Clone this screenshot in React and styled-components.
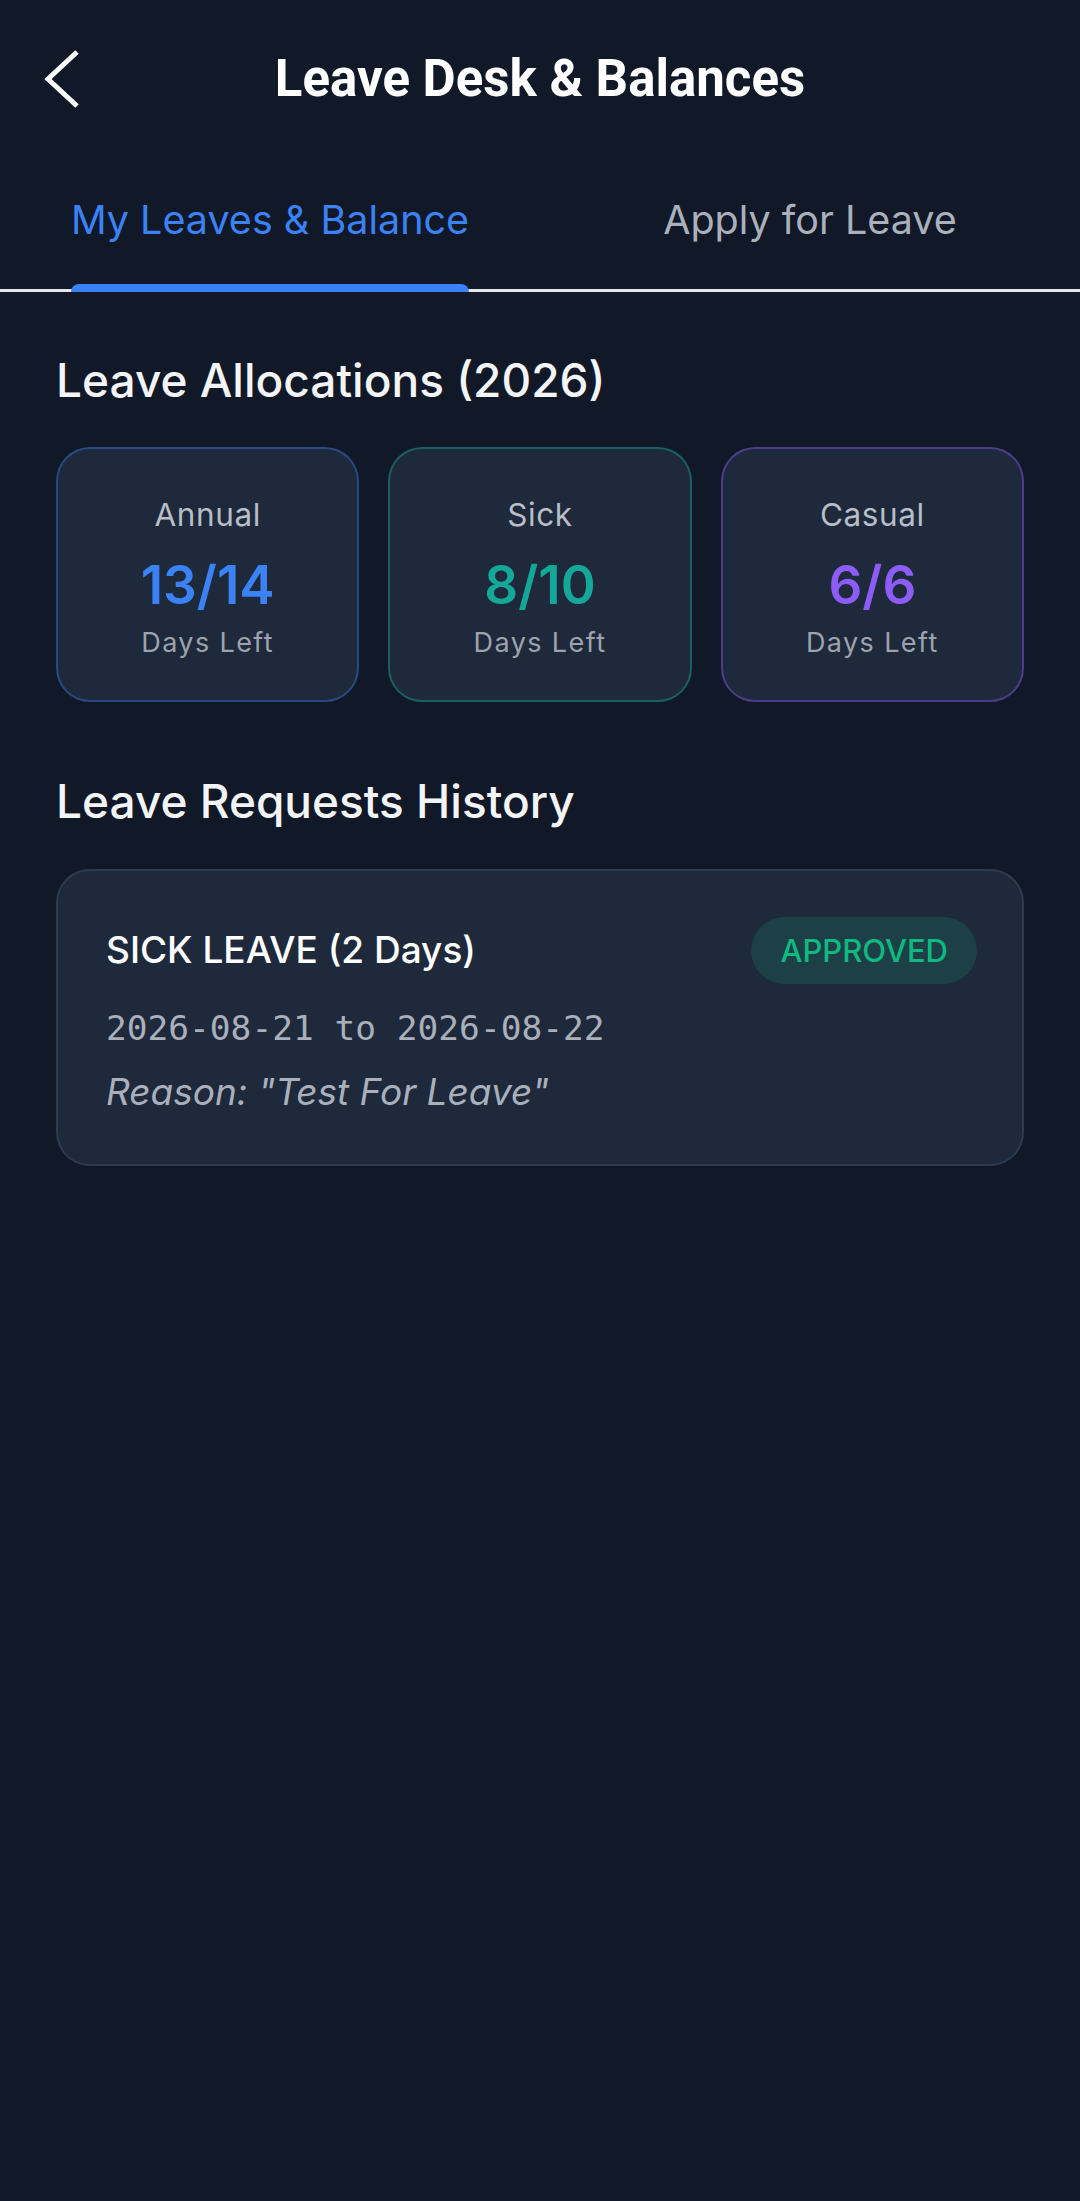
import React, { useState } from 'react'
import styled, { createGlobalStyle } from 'styled-components'

const COLORS = {
  BG: '#111827',
  CARD: '#1e293b',
  BLUE: '#3b82f6',
  TEAL: '#14a899',
  PURPLE: '#8b5cf6',
  GREEN: '#10b981',
}

const GlobalStyle = createGlobalStyle`
  html, body {
    margin: 0;
    padding: 0;
    background: ${COLORS.BG};
    min-height: 100%;
  }
  body {
    font-family: Inter, "Noto Sans", sans-serif;
    color: #f3f4f6;
  }
  * { box-sizing: border-box; }
`

const Page = styled.div`
  min-height: 2201px;
  background: ${COLORS.BG};
`

const Header = styled.header`
  display: grid;
  grid-template-columns: 1fr auto 1fr;
  align-items: center;
  height: 158px;
  padding: 0 40px;
`

const BackButton = styled.button`
  justify-self: start;
  display: flex;
  padding: 0;
  border: none;
  background: none;
  cursor: pointer;
`

const Title = styled.h1`
  margin: 0;
  font-family: Roboto, "Liberation Sans", sans-serif;
  font-weight: 700;
  font-size: 51px;
  line-height: 1.17;
  color: #ffffff;
`

const TabBar = styled.nav`
  display: grid;
  grid-template-columns: 1fr 1fr;
  box-shadow: inset 0 -3px 0 #e5e7eb;
`

const Tab = styled.button`
  display: flex;
  justify-content: center;
  padding: 39px 0 0;
  border: none;
  background: none;
  cursor: pointer;
`

const TabInner = styled.span`
  display: inline-flex;
  flex-direction: column;
  align-items: stretch;
`

const TabLabel = styled.span`
  font-family: Inter, sans-serif;
  font-size: 39.5px;
  line-height: 1.21;
  font-weight: 400;
  color: ${p => (p.$active ? COLORS.BLUE : '#aab1bc')};
`

const TabIndicator = styled.span`
  display: block;
  height: 8px;
  margin-top: 39px;
  border-radius: 8px 8px 0 0;
  background: ${p => (p.$active ? COLORS.BLUE : 'transparent')};
`

const Content = styled.main`
  padding: 61px 56px 0;
`

const SectionTitle = styled.h2`
  margin: ${p => p.$top || 0}px 0 0;
  font-family: Inter, sans-serif;
  font-size: 46px;
  line-height: 1.21;
  font-weight: 500;
  color: #f3f4f6;
`

const Allocations = styled.div`
  display: grid;
  grid-template-columns: repeat(3, 1fr);
  gap: 29px;
  margin-top: 39px;
`

const AllocCard = styled.div`
  height: 255px;
  padding-top: 47px;
  display: flex;
  flex-direction: column;
  align-items: center;
  background: ${COLORS.CARD};
  border: 2px solid ${p => p.$border};
  border-radius: 34px;
`

const AllocLabel = styled.div`
  font-size: 31.5px;
  line-height: 1.21;
  color: #b8bec8;
  letter-spacing: 0.6px;
`

const AllocValue = styled.div`
  margin-top: 18px;
  font-size: 53px;
  line-height: 1.21;
  font-weight: 600;
  color: ${p => p.$color};
`

const AllocNote = styled.div`
  margin-top: 10.5px;
  font-size: 27px;
  line-height: 1.21;
  letter-spacing: 1.4px;
  color: #9ca3af;
`

const HistoryList = styled.div`
  display: flex;
  flex-direction: column;
  gap: 28px;
  margin-top: 39px;
`

const RequestCard = styled.div`
  padding: 46px 45px 49px 48px;
  background: ${COLORS.CARD};
  border: 2px solid #2e3b50;
  border-radius: 34px;
`

const RequestTop = styled.div`
  display: flex;
  justify-content: space-between;
  align-items: center;
`

const RequestType = styled.div`
  font-size: 37px;
  font-weight: 500;
  line-height: 1.21;
  color: #ffffff;
`

const StatusPill = styled.span`
  display: inline-flex;
  align-items: center;
  height: 67px;
  padding: 0 29px;
  border-radius: 34px;
  font-size: 31px;
  font-weight: 500;
  color: ${p => p.$color};
  background: ${p => p.$bg};
`

const RequestDates = styled.div`
  margin-top: 24px;
  font-family: "DejaVu Sans Mono", "Liberation Mono", monospace;
  font-size: 34.5px;
  line-height: 1.2;
  color: #a9b0bb;
`

const RequestReason = styled.div`
  margin-top: 21px;
  font-size: 37px;
  font-style: italic;
  line-height: 1.2;
  color: #a9b0bb;
`

const allocations = [
  { type: 'Annual', left: 13, total: 14, color: COLORS.BLUE, border: 'rgba(59,130,246,0.38)' },
  { type: 'Sick', left: 8, total: 10, color: COLORS.TEAL, border: 'rgba(20,184,166,0.38)' },
  { type: 'Casual', left: 6, total: 6, color: COLORS.PURPLE, border: 'rgba(139,92,246,0.42)' },
]

const requests = [
  {
    id: 1,
    type: 'SICK LEAVE',
    days: 2,
    from: '2026-08-21',
    to: '2026-08-22',
    reason: 'Test For Leave',
    status: 'APPROVED',
  },
]

const STATUS_STYLE = {
  APPROVED: { color: COLORS.GREEN, bg: 'rgba(16,185,129,0.16)' },
}

const BackIcon = () => (
  <svg width="42" height="64" viewBox="0 0 42 64" fill="none">
    <polyline points="37,5 8,32 37,59" stroke="#ffffff" strokeWidth="5" strokeLinejoin="miter" />
  </svg>
)

export default function App() {
  const [tab, setTab] = useState(0)
  const tabs = ['My Leaves & Balance', 'Apply for Leave']

  return (
    <>
      <GlobalStyle />
      <Page>
        <Header>
          <BackButton aria-label="back">
            <BackIcon />
          </BackButton>
          <Title>Leave Desk &amp; Balances</Title>
          <span />
        </Header>

        <TabBar>
          {tabs.map((t, i) => (
            <Tab key={t} onClick={() => setTab(i)}>
              <TabInner>
                <TabLabel $active={tab === i}>{t}</TabLabel>
                <TabIndicator $active={tab === i} />
              </TabInner>
            </Tab>
          ))}
        </TabBar>

        <Content>
          <SectionTitle>Leave Allocations (2026)</SectionTitle>
          <Allocations>
            {allocations.map(a => (
              <AllocCard key={a.type} $border={a.border}>
                <AllocLabel>{a.type}</AllocLabel>
                <AllocValue $color={a.color}>{a.left}/{a.total}</AllocValue>
                <AllocNote>Days Left</AllocNote>
              </AllocCard>
            ))}
          </Allocations>

          <SectionTitle $top={72}>Leave Requests History</SectionTitle>
          <HistoryList>
            {requests.map(r => (
              <RequestCard key={r.id}>
                <RequestTop>
                  <RequestType>{r.type} ({r.days} Days)</RequestType>
                  <StatusPill $color={STATUS_STYLE[r.status].color} $bg={STATUS_STYLE[r.status].bg}>
                    {r.status}
                  </StatusPill>
                </RequestTop>
                <RequestDates>{r.from} to {r.to}</RequestDates>
                <RequestReason>Reason: "{r.reason}"</RequestReason>
              </RequestCard>
            ))}
          </HistoryList>
        </Content>
      </Page>
    </>
  )
}
